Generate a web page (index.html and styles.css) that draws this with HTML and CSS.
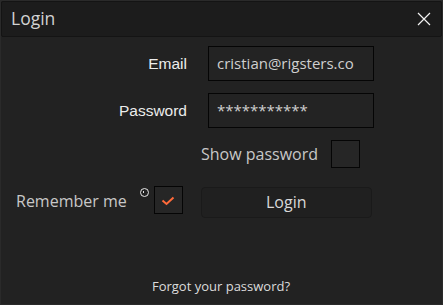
FILE: index.html
```html
<!DOCTYPE html>
<html>
<head>
<meta charset="utf-8">
<link rel="stylesheet" href="styles.css">
</head>
<body>
<div class="dialog">
  <div class="titlebar">
    <span class="title">Login</span>
    <svg class="close" width="14" height="14" viewBox="0 0 14 14"><path d="M1 1L13 13M13 1L1 13" stroke="#f2f2f2" stroke-width="1.2" fill="none"/></svg>
  </div>
  <div class="form">
    <div class="row field">
      <label class="label">Email</label>
      <div class="input">cristian@rigsters.co</div>
    </div>
    <div class="row field pw">
      <label class="label">Password</label>
      <div class="input">***********</div>
    </div>
    <div class="row show">
      <span class="text">Show password</span>
      <span class="check"></span>
    </div>
    <div class="row remember">
      <span class="text">Remember me</span>
      <span class="info"></span>
      <span class="check checked">
        <svg width="14" height="10" viewBox="0 0 14 10"><path d="M1.5 4.5L5.5 8L12.5 1.5" stroke="#ff6a3a" stroke-width="2" fill="none"/></svg>
      </span>
      <button class="btn">Login</button>
    </div>
  </div>
  <div class="footer">Forgot your password?</div>
</div>
</body>
</html>
```

FILE: styles.css
```css
html, body {
  margin: 0;
  padding: 0;
  background: #222222;
}
.dialog {
  box-sizing: border-box;
  width: 443px;
  height: 305px;
  background: #222222;
  border: 1px solid #2a2a2a;
  display: flex;
  flex-direction: column;
  font-family: "Open Sans", sans-serif;
  color: #cfcfcf;
}
.titlebar {
  box-sizing: border-box;
  height: 36px;
  background: #1c1c1c;
  border: 1px solid #141414;
  border-radius: 2px;
  display: flex;
  align-items: center;
  justify-content: space-between;
  padding: 0 10px 0 9px;
}
.title {
  font-size: 17.5px;
  color: #d2d2d2;
  line-height: 1;
  margin-top: -1px;
}
.close {
  display: block;
}
.form {
  display: flex;
  flex-direction: column;
  padding-top: 9px;
}
.row {
  display: flex;
  align-items: center;
}
.field {
  height: 35px;
}
.field.pw {
  margin-top: 12px;
}
.label {
  width: 186px;
  box-sizing: border-box;
  text-align: right;
  font-family: "Liberation Sans", Arial, sans-serif;
  font-size: 15.5px;
  color: #ececec;
  margin-right: 21px;
}
.input {
  box-sizing: border-box;
  width: 166px;
  height: 35px;
  border: 1px solid #050505;
  background: #232323;
  font-size: 15px;
  color: #cfcfcf;
  padding: 0 0 1px 8px;
  display: flex;
  align-items: center;
}
.show {
  margin-top: 12px;
  padding-left: 200px;
  height: 28px;
}
.text {
  font-size: 16px;
  color: #c8c8c8;
  line-height: 20px;
}
.check {
  box-sizing: border-box;
  width: 29px;
  height: 28px;
  border: 1px solid #050505;
  background: #262626;
  display: flex;
  align-items: center;
  justify-content: center;
}
.show .check {
  margin-left: 13px;
}
.remember {
  margin-top: 18px;
  padding-left: 15px;
  height: 32px;
  align-items: flex-start;
}
.remember .text {
  margin-top: 5px;
}
.info {
  box-sizing: border-box;
  width: 9px;
  height: 9px;
  border: 1.5px solid #e6e6e6;
  border-radius: 50%;
  margin: 2px 5px 0 13px;
  position: relative;
}
.info::after {
  content: "";
  position: absolute;
  left: 2px;
  top: 2px;
  width: 1.5px;
  height: 2px;
  background: #e6e6e6;
}
.checked svg {
  display: block;
  margin-top: 1px;
}
.btn {
  box-sizing: border-box;
  margin-left: 18px;
  width: 171px;
  height: 31px;
  margin-top: 1px;
  background: #202020;
  border: 1px solid #1a1a1a;
  border-radius: 4px;
  font-family: "Open Sans", sans-serif;
  font-size: 16px;
  color: #d8d8d8;
  padding: 0 0 1px 0;
}
.footer {
  margin-top: auto;
  margin-bottom: 9px;
  text-align: center;
  font-size: 13px;
  color: #dcdcdc;
  padding-right: 1px;
}
```
